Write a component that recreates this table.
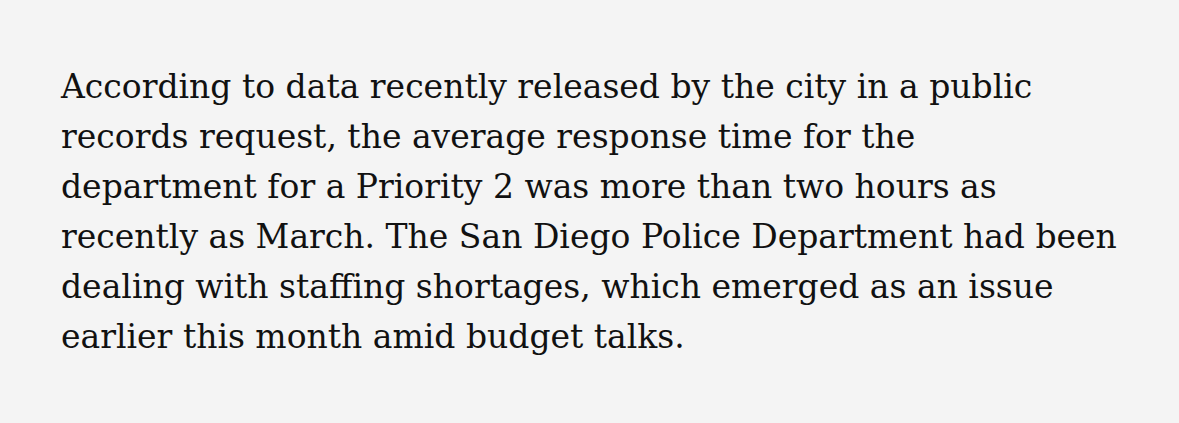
export default function App() {
  return (
    <div className="w-[1179px] h-[423px] bg-[#f4f4f4] pt-[62px] pl-[61px]">
      <p className="text-[33px] leading-[50px] text-[#111111] whitespace-nowrap" style={{ fontFamily: '"DejaVu Serif", serif' }}>
        According to data recently released by the city in a public<br />
        records request, the average response time for the<br />
        department for a Priority 2 was more than two hours as<br />
        recently as March. The San Diego Police Department had been<br />
        dealing with staffing shortages, which emerged as an issue<br />
        earlier this month amid budget talks.
      </p>
    </div>
  );
}
